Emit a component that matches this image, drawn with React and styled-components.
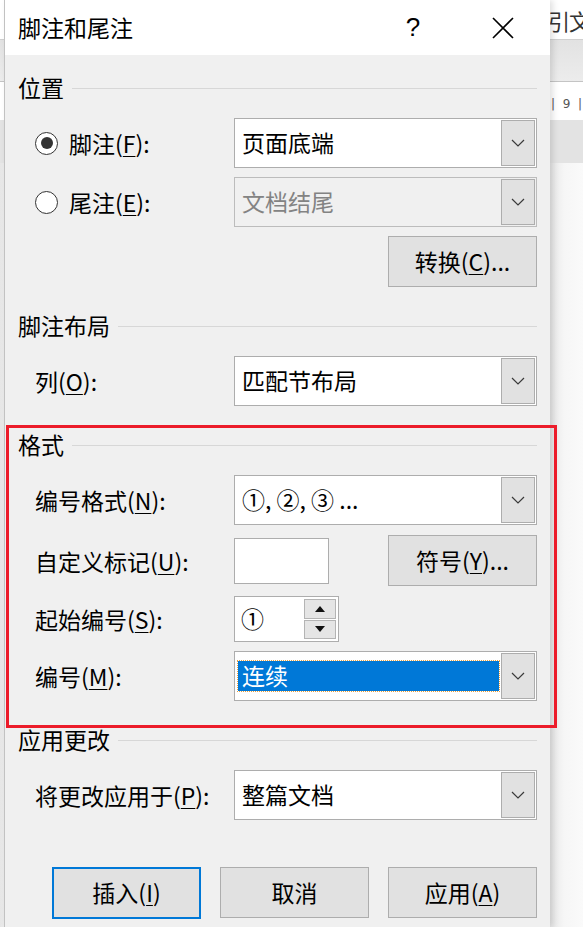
import React from 'react';
import styled, { createGlobalStyle } from 'styled-components';

const Chevron = () => (
  <svg width="14" height="8" viewBox="0 0 14 8">
    <path d="M1 1l6 6 6-6" fill="none" stroke="#3a3a3a" strokeWidth="1.2" />
  </svg>
);

const Combo = ({ value, disabled, selected }) => (
  <ComboBox $disabled={disabled}>
    <ComboValue $selected={selected}>
      {selected ? <Highlight>{value}</Highlight> : value}
    </ComboValue>
    <DropButton>
      <Chevron />
    </DropButton>
  </ComboBox>
);

const Heading = ({ children }) => (
  <HeadingRow>
    <span>{children}</span>
    <Rule />
  </HeadingRow>
);

const Backdrop = ({ width, showText }) => (
  <BackdropColumn $width={width}>
    <TabBand>{showText && <TabText>引文</TabText>}</TabBand>
    <RibbonBand />
    <RulerBand>
      {showText && (
        <>
          <span>|</span>
          <span>9</span>
          <span>|</span>
        </>
      )}
    </RulerBand>
    <StripBand />
    <DocBand />
  </BackdropColumn>
);

const App = () => {
  return (
    <Page>
      <GlobalStyle />
      <Backdrop width={4} />
      <Dialog>
        <TitleBar>
          <Title>脚注和尾注</Title>
          <HelpButton>?</HelpButton>
          <CloseButton>
            <svg width="22" height="22" viewBox="0 0 22 22">
              <path d="M1 1L21 21M21 1L1 21" stroke="#000" strokeWidth="1.6" />
            </svg>
          </CloseButton>
        </TitleBar>

        <Body>
          <Section>
            <Heading>位置</Heading>
            <Rows>
              <Row>
                <RadioLabel>
                  <Radio $checked />
                  <span>脚注(<u>F</u>):</span>
                </RadioLabel>
                <Combo value="页面底端" />
              </Row>
              <Row>
                <RadioLabel>
                  <Radio />
                  <span>尾注(<u>E</u>):</span>
                </RadioLabel>
                <Combo value="文档结尾" disabled />
              </Row>
              <ButtonRow>
                <Button>转换(<u>C</u>)...</Button>
              </ButtonRow>
            </Rows>
          </Section>

          <Section>
            <Heading>脚注布局</Heading>
            <Rows>
              <Row>
                <Label>列(<u>O</u>):</Label>
                <Combo value="匹配节布局" />
              </Row>
            </Rows>
          </Section>

          <Section>
            <Heading>格式</Heading>
            <Rows>
              <Row>
                <Label>编号格式(<u>N</u>):</Label>
                <Combo value="①, ②, ③ ..." />
              </Row>
              <Row $tall>
                <Label>自定义标记(<u>U</u>):</Label>
                <SplitCell>
                  <TextInput />
                  <Button>符号(<u>Y</u>)...</Button>
                </SplitCell>
              </Row>
              <Row $short>
                <Label>起始编号(<u>S</u>):</Label>
                <SpinBox>
                  <SpinValue>①</SpinValue>
                  <SpinButtons>
                    <SpinButton>
                      <svg width="10" height="6" viewBox="0 0 10 6">
                        <polygon points="0,6 5,0 10,6" fill="#111" />
                      </svg>
                    </SpinButton>
                    <SpinButton>
                      <svg width="10" height="6" viewBox="0 0 10 6">
                        <polygon points="0,0 10,0 5,6" fill="#111" />
                      </svg>
                    </SpinButton>
                  </SpinButtons>
                </SpinBox>
              </Row>
              <Row>
                <Label>编号(<u>M</u>):</Label>
                <Combo value="连续" selected />
              </Row>
            </Rows>
          </Section>

          <Section>
            <Heading>应用更改</Heading>
            <Rows>
              <Row>
                <Label>将更改应用于(<u>P</u>):</Label>
                <Combo value="整篇文档" />
              </Row>
            </Rows>
          </Section>

          <Footer>
            <Button $focused>插入(<u>I</u>)</Button>
            <Button>取消</Button>
            <Button>应用(<u>A</u>)</Button>
          </Footer>
        </Body>
      </Dialog>
      <Backdrop width={33} showText />
      <Marker />
    </Page>
  );
};

const GlobalStyle = createGlobalStyle`
  html, body {
    margin: 0;
    padding: 0;
  }
  body {
    width: 583px;
    height: 927px;
    overflow: hidden;
    font-family: "Noto Sans CJK SC", "Noto Sans", sans-serif;
    color: #000;
  }
  *, *::before, *::after {
    box-sizing: border-box;
  }
  u {
    text-underline-offset: 3px;
    text-decoration-thickness: 1px;
  }
`;

const Page = styled.div`
  position: relative;
  display: flex;
  width: 583px;
  height: 927px;
  overflow: hidden;
  background: #f7f7f7;
`;

const BackdropColumn = styled.div`
  width: ${(p) => p.$width}px;
  flex: none;
  display: flex;
  flex-direction: column;
  overflow: hidden;
  white-space: nowrap;
`;

const TabBand = styled.div`
  height: 40px;
  background: #fff;
  border-bottom: 1px solid #d0d0d0;
  display: flex;
  align-items: center;
`;

const TabText = styled.span`
  font-size: 22px;
  color: #333;
  margin-left: -2px;
  letter-spacing: -1px;
`;

const RibbonBand = styled.div`
  height: 42px;
  background: linear-gradient(#e2e2e2, #ececec);
  border-bottom: 1px solid #c4c4c4;
`;

const RulerBand = styled.div`
  height: 38px;
  background: #fff;
  display: flex;
  align-items: center;
  justify-content: space-between;
  padding: 6px 1px 0 1px;
  font-family: "DejaVu Sans", sans-serif;
  font-size: 12px;
  color: #555;
`;

const StripBand = styled.div`
  height: 43px;
  background: #e3e3e3;
`;

const DocBand = styled.div`
  flex: 1;
  background: linear-gradient(90deg, #e6e6e6, #f6f6f6 14px, #fafafa);
`;

const Dialog = styled.div`
  position: relative;
  z-index: 1;
  width: 546px;
  flex: none;
  display: flex;
  flex-direction: column;
  background: #f0f0f0;
  border-left: 1px solid #c2c2c2;
  box-shadow: 3px 0 6px rgba(0, 0, 0, 0.12);
`;

const TitleBar = styled.div`
  height: 55px;
  flex: none;
  display: flex;
  align-items: center;
  padding: 0 22px 0 13px;
  background: #fff;
`;

const Title = styled.div`
  flex: 1;
  font-size: 23px;
  padding-bottom: 2px;
`;

const HelpButton = styled.div`
  width: 50px;
  text-align: center;
  font-family: "Liberation Sans", sans-serif;
  font-size: 26px;
`;

const CloseButton = styled.div`
  width: 50px;
  margin-left: 40px;
  display: flex;
  justify-content: center;
`;

const Body = styled.div`
  flex: 1;
  padding: 18px 13px 0 13px;
`;

const Section = styled.div`
  & + & {
    margin-top: 24px;
  }
`;

const HeadingRow = styled.div`
  height: 30px;
  display: flex;
  align-items: center;
  gap: 8px;
  font-size: 23px;
  span {
    padding-bottom: 3px;
  }
`;

const Rule = styled.div`
  flex: 1;
  height: 1px;
  background: #d7d7d7;
`;

const Rows = styled.div`
  margin-top: 15px;
  padding-left: 17px;
  display: flex;
  flex-direction: column;
  gap: 9px;
`;

const Row = styled.div`
  display: grid;
  grid-template-columns: 199px 1fr;
  align-items: center;
  height: ${(p) => (p.$tall ? 53 : p.$short ? 46 : 50)}px;
`;

const Label = styled.div`
  font-size: 23px;
  white-space: nowrap;
`;

const RadioLabel = styled(Label)`
  display: flex;
  align-items: center;
  gap: 11px;
`;

const Radio = styled.div`
  width: 23px;
  height: 23px;
  border-radius: 50%;
  border: 1.6px solid #333;
  background: #fff;
  display: flex;
  align-items: center;
  justify-content: center;
  &::after {
    content: '';
    display: ${(p) => (p.$checked ? 'block' : 'none')};
    width: 12px;
    height: 12px;
    border-radius: 50%;
    background: #333;
  }
`;

const ComboBox = styled.div`
  height: 50px;
  display: flex;
  padding: 1px 1px 1px 0;
  border: 1px solid ${(p) => (p.$disabled ? '#bcbcbc' : '#adadad')};
  background: ${(p) => (p.$disabled ? '#f0f0f0' : '#fff')};
  color: ${(p) => (p.$disabled ? '#838383' : '#000')};
`;

const ComboValue = styled.div`
  flex: 1;
  display: flex;
  align-items: center;
  font-size: 23px;
  padding: ${(p) => (p.$selected ? '8px 2px 8px 3px' : '0 0 2px 7px')};
  white-space: nowrap;
`;

const Highlight = styled.div`
  width: 100%;
  height: 100%;
  display: flex;
  align-items: center;
  padding: 0 0 2px 4px;
  background: #0078d7;
  color: #fff;
  outline: 1px dotted #e8a040;
`;

const DropButton = styled.div`
  width: 34px;
  display: flex;
  align-items: center;
  justify-content: center;
  background: #e1e1e1;
  border: 1px solid #adadad;
`;

const ButtonRow = styled.div`
  display: flex;
  justify-content: flex-end;
  height: 51px;
`;

const Button = styled.div`
  width: 149px;
  height: ${(p) => (p.$focused ? 52 : 51)}px;
  display: flex;
  align-items: center;
  justify-content: center;
  padding-bottom: 2px;
  font-size: 23px;
  background: #e1e1e1;
  border: ${(p) => (p.$focused ? '2px solid #0078d7' : '1px solid #adadad')};
`;

const SplitCell = styled.div`
  display: flex;
  align-items: center;
  justify-content: space-between;
`;

const TextInput = styled.div`
  width: 95px;
  height: 46px;
  background: #fff;
  border: 1px solid #adadad;
`;

const SpinBox = styled.div`
  width: 105px;
  height: 46px;
  display: flex;
  padding: 2px 2px 2px 0;
  background: #fff;
  border: 1px solid #adadad;
`;

const SpinValue = styled.div`
  flex: 1;
  display: flex;
  align-items: center;
  padding: 0 0 2px 6px;
  font-size: 23px;
`;

const SpinButtons = styled.div`
  width: 32px;
  display: flex;
  flex-direction: column;
  gap: 1px;
`;

const SpinButton = styled.div`
  flex: 1;
  display: flex;
  align-items: center;
  justify-content: center;
  background: #e5e5e5;
  border: 1px solid #b4b4b4;
`;

const Footer = styled.div`
  margin-top: 47px;
  display: flex;
  justify-content: flex-end;
  gap: 19px;
`;

const Marker = styled.div`
  position: absolute;
  z-index: 2;
  left: 6px;
  top: 425px;
  width: 551px;
  height: 303px;
  border: 3px solid #ec1c2a;
  pointer-events: none;
`;

export default App;
